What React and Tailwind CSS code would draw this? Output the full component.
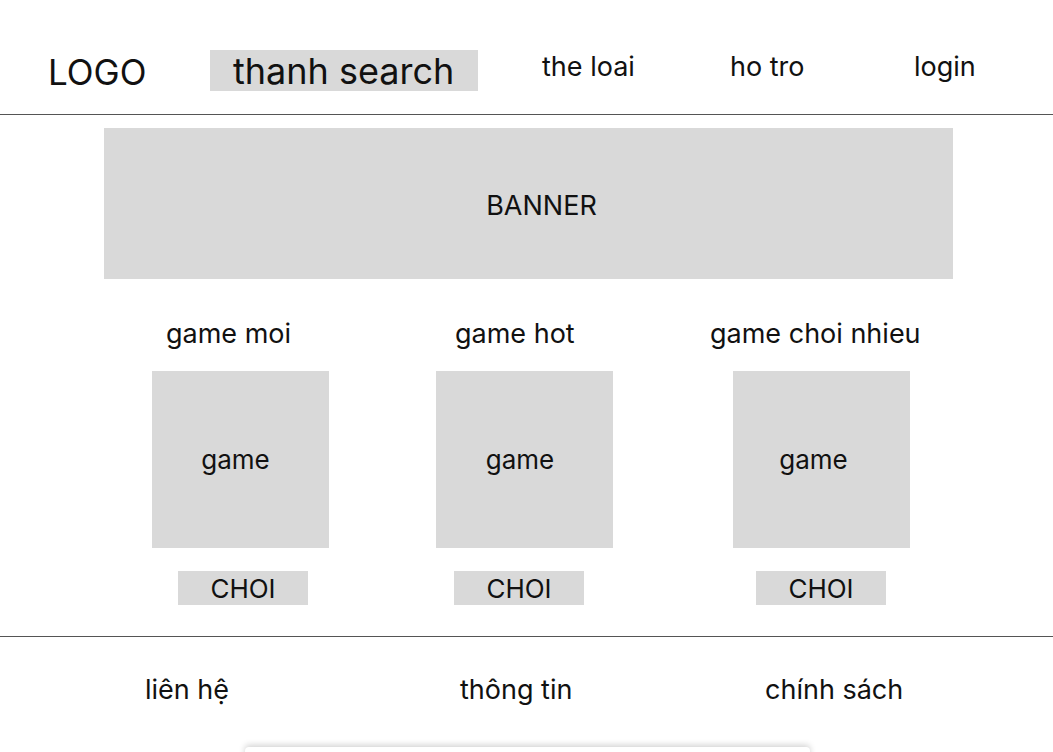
const games = [
  { title: 'game moi', left: 'ml-[152px]', head: 'ml-[14px]', label: 'pr-[10px]', btn: 'ml-[26px]' },
  { title: 'game hot', left: 'ml-[107px]', head: 'ml-[19px]', label: 'pr-[9px]', btn: 'ml-[18px]' },
  { title: 'game choi nhieu', left: 'ml-[120px]', head: 'ml-[-23px]', label: 'pr-[16px]', btn: 'ml-[23px]' },
];

function GameColumn({ game }) {
  return (
    <div className={`${game.left} flex w-[177px] flex-col`}>
      <div className={`${game.head} h-[29px] whitespace-nowrap text-[27px] leading-[29px]`}>{game.title}</div>
      <div className={`${game.label} mt-[23px] flex h-[177px] w-[177px] items-center justify-center bg-[#d9d9d9] text-[26px]`}>
        game
      </div>
      <button className={`${game.btn} mt-[23px] flex h-[34px] w-[130px] items-center justify-center bg-[#d9d9d9] text-[26px]`}>
        CHOI
      </button>
    </div>
  );
}

function App() {
  return (
    <div className="h-[752px] w-[1053px] overflow-hidden bg-white text-[#111] font-['Inter',sans-serif]">
      <header className="flex h-[115px] items-start border-b border-[#555]">
        <div className="ml-[48px] mt-[51px] w-[162px] text-[35px] leading-[42px]">LOGO</div>
        <div className="mt-[50px] flex h-[41px] w-[268px] items-center bg-[#d9d9d9] pl-[23px] text-[36px]">
          thanh search
        </div>
        <nav className="mt-[50px] flex text-[27px] leading-[34px]">
          <a className="ml-[64px] w-[188px]">the loai</a>
          <a className="w-[184px]">ho tro</a>
          <a>login</a>
        </nav>
      </header>

      <div className="ml-[104px] mt-[13px] flex h-[151px] w-[849px] items-center justify-center bg-[#d9d9d9] pl-[26px] pt-[5px] text-[27px]">
        BANNER
      </div>

      <div className="mt-[40px] flex h-[317px]">
        {games.map((g) => (
          <GameColumn key={g.title} game={g} />
        ))}
      </div>

      <footer className="border-t border-[#555]">
        <div className="mt-[38px] flex h-[29px] text-[27px] leading-[29px]">
          <span className="ml-[145px] w-[315px]">liên hệ</span>
          <span className="w-[305px]">thông tin</span>
          <span>chính sách</span>
        </div>
        <div className="ml-[245px] mt-[43px] h-[20px] w-[565px] rounded-t-[4px] bg-white shadow-[0_-2px_6px_rgba(0,0,0,0.18)]"></div>
      </footer>
    </div>
  );
}

export default App;
